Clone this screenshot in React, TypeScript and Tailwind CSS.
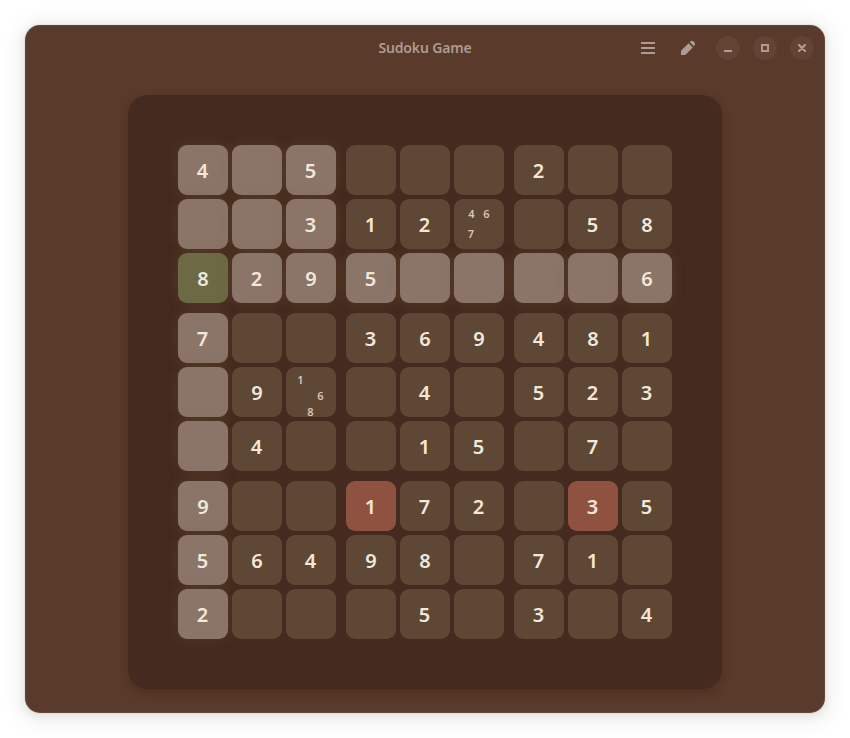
const rows = [
  '4.5...2..',
  '..312..58',
  '8295....6',
  '7..369481',
  '.9..4.523',
  '.4..15.7.',
  '9..172.35',
  '56498.71.',
  '2...5.3.4',
];

type Note = { value: number; place: string };

const notes: Record<string, { grid: string; items: Note[] }> = {
  '1-5': {
    grid: 'grid-cols-[15px_15px] grid-rows-[20px_20px] pt-[5px] pl-[10px]',
    items: [
      { value: 4, place: 'col-start-1 row-start-1' },
      { value: 6, place: 'col-start-2 row-start-1' },
      { value: 7, place: 'col-start-1 row-start-2 pr-px' },
    ],
  },
  '4-2': {
    grid: 'grid-cols-[10px_10px_10px] grid-rows-[16px_16px_16px] pt-[3px] pl-[7px]',
    items: [
      { value: 1, place: 'col-start-1 row-start-1' },
      { value: 6, place: 'col-start-3 row-start-2' },
      { value: 8, place: 'col-start-2 row-start-3' },
    ],
  },
};

const selected = { row: 2, col: 0 };
const conflicts = ['6-3', '6-7'];

function cellStyle(row: number, col: number) {
  if (row === selected.row && col === selected.col) return 'bg-[#6c6945] shadow-[0_0_14px_rgba(130,102,60,0.28)]';
  if (conflicts.includes(`${row}-${col}`)) return 'bg-[#8f5241]';
  const peer = row === selected.row || col === selected.col || (row < 3 && col < 3);
  return peer ? 'bg-[#8a7568] shadow-[0_0_14px_rgba(130,102,60,0.28)]' : 'bg-[#5f4735]';
}

function Cell({ row, col }: { row: number; col: number }) {
  const value = rows[row][col];
  const note = notes[`${row}-${col}`];
  return (
    <div className={`flex size-[50px] rounded-[9px] ${note ? '' : 'items-center justify-center'} ${cellStyle(row, col)}`}>
      {note ? (
        <div className={`grid text-[11px] leading-5 font-semibold text-[#dcc4b5] ${note.grid}`}>
          {note.items.map((n) => (
            <span key={n.value} className={`w-[15px] text-center ${n.place}`}>{n.value}</span>
          ))}
        </div>
      ) : (
        value !== '.' && (
          <span className={`pt-[2px] text-[20px] leading-6 font-semibold text-[#f3e7db] ${'689'.includes(value) ? '' : 'pr-px'}`}>
            {value}
          </span>
        )
      )}
    </div>
  );
}

export default function App() {
  return (
    <div className="h-[738px] w-[850px] overflow-hidden bg-white p-[25px] font-['Noto_Sans',sans-serif]">
      <div className="flex h-[688px] w-[800px] flex-col items-center rounded-[15px] bg-[#5a3a2a] shadow-[0_2px_8px_2px_rgba(0,0,0,0.07),0_3px_20px_8px_rgba(0,0,0,0.05),0_0_0_1px_rgba(0,0,0,0.04),inset_0_0_0_1px_rgba(255,255,255,0.07)]">
        <header className="grid h-[46px] w-full shrink-0 grid-cols-[1fr_auto_1fr] items-center text-[#ad9c93]">
          <span />
          <h1 className="pb-[2px] text-[14px] font-semibold tracking-[-0.15px]">Sudoku Game</h1>
          <div className="flex items-center justify-end pr-[11px]">
            <svg className="mr-6 size-4" viewBox="0 0 16 16" fill="currentColor">
              <path d="M1 2h14v2H1zM1 7h14v2H1zM1 12h14v2H1z" />
            </svg>
            <svg className="mr-5 size-4" viewBox="0 0 16 16" fill="currentColor">
              <path d="M8.600 3.200 1.700 10C1.200 10.500 1 11 1 11.600V15h3.400c.6 0 1.200-.2 1.700-.7L12.800 7.400zM9.700 2.100l4.200 4.200.6-.6c1-1 .7-2.500-.3-3.600l-.5-.5c-1.100-1-2.400-1-3.400-.1z" />
            </svg>
            <div className="flex gap-[13px]">
              <span className="flex size-6 items-center justify-center rounded-full bg-[#624334]">
                <svg className="size-4" viewBox="0 0 16 16" fill="currentColor"><path d="M4 10h8v2H4z" /></svg>
              </span>
              <span className="flex size-6 items-center justify-center rounded-full bg-[#624334]">
                <svg className="size-4" viewBox="0 0 16 16" fill="none" stroke="currentColor" strokeWidth="2"><path d="M5 5h6v6H5z" /></svg>
              </span>
              <span className="flex size-6 items-center justify-center rounded-full bg-[#624334]">
                <svg className="size-4" viewBox="0 0 16 16" fill="none" stroke="currentColor" strokeWidth="2.200" strokeLinecap="round"><path d="m5 5 6 6M11 5l-6 6" /></svg>
              </span>
            </div>
          </div>
        </header>
        <main className="mt-6 flex size-[594px] shrink-0 flex-col gap-[10px] rounded-[20px] bg-[#442a1f] p-[50px] shadow-[0_4px_10px_rgba(50,28,8,0.3)]">
          {[0, 3, 6].map((band) => (
            <div key={band} className="flex flex-col gap-1">
              {[0, 1, 2].map((r) => (
                <div key={r} className="flex gap-[10px]">
                  {[0, 3, 6].map((stack) => (
                    <div key={stack} className="flex gap-1">
                      {[0, 1, 2].map((c) => <Cell key={c} row={band + r} col={stack + c} />)}
                    </div>
                  ))}
                </div>
              ))}
            </div>
          ))}
        </main>
      </div>
    </div>
  );
}
